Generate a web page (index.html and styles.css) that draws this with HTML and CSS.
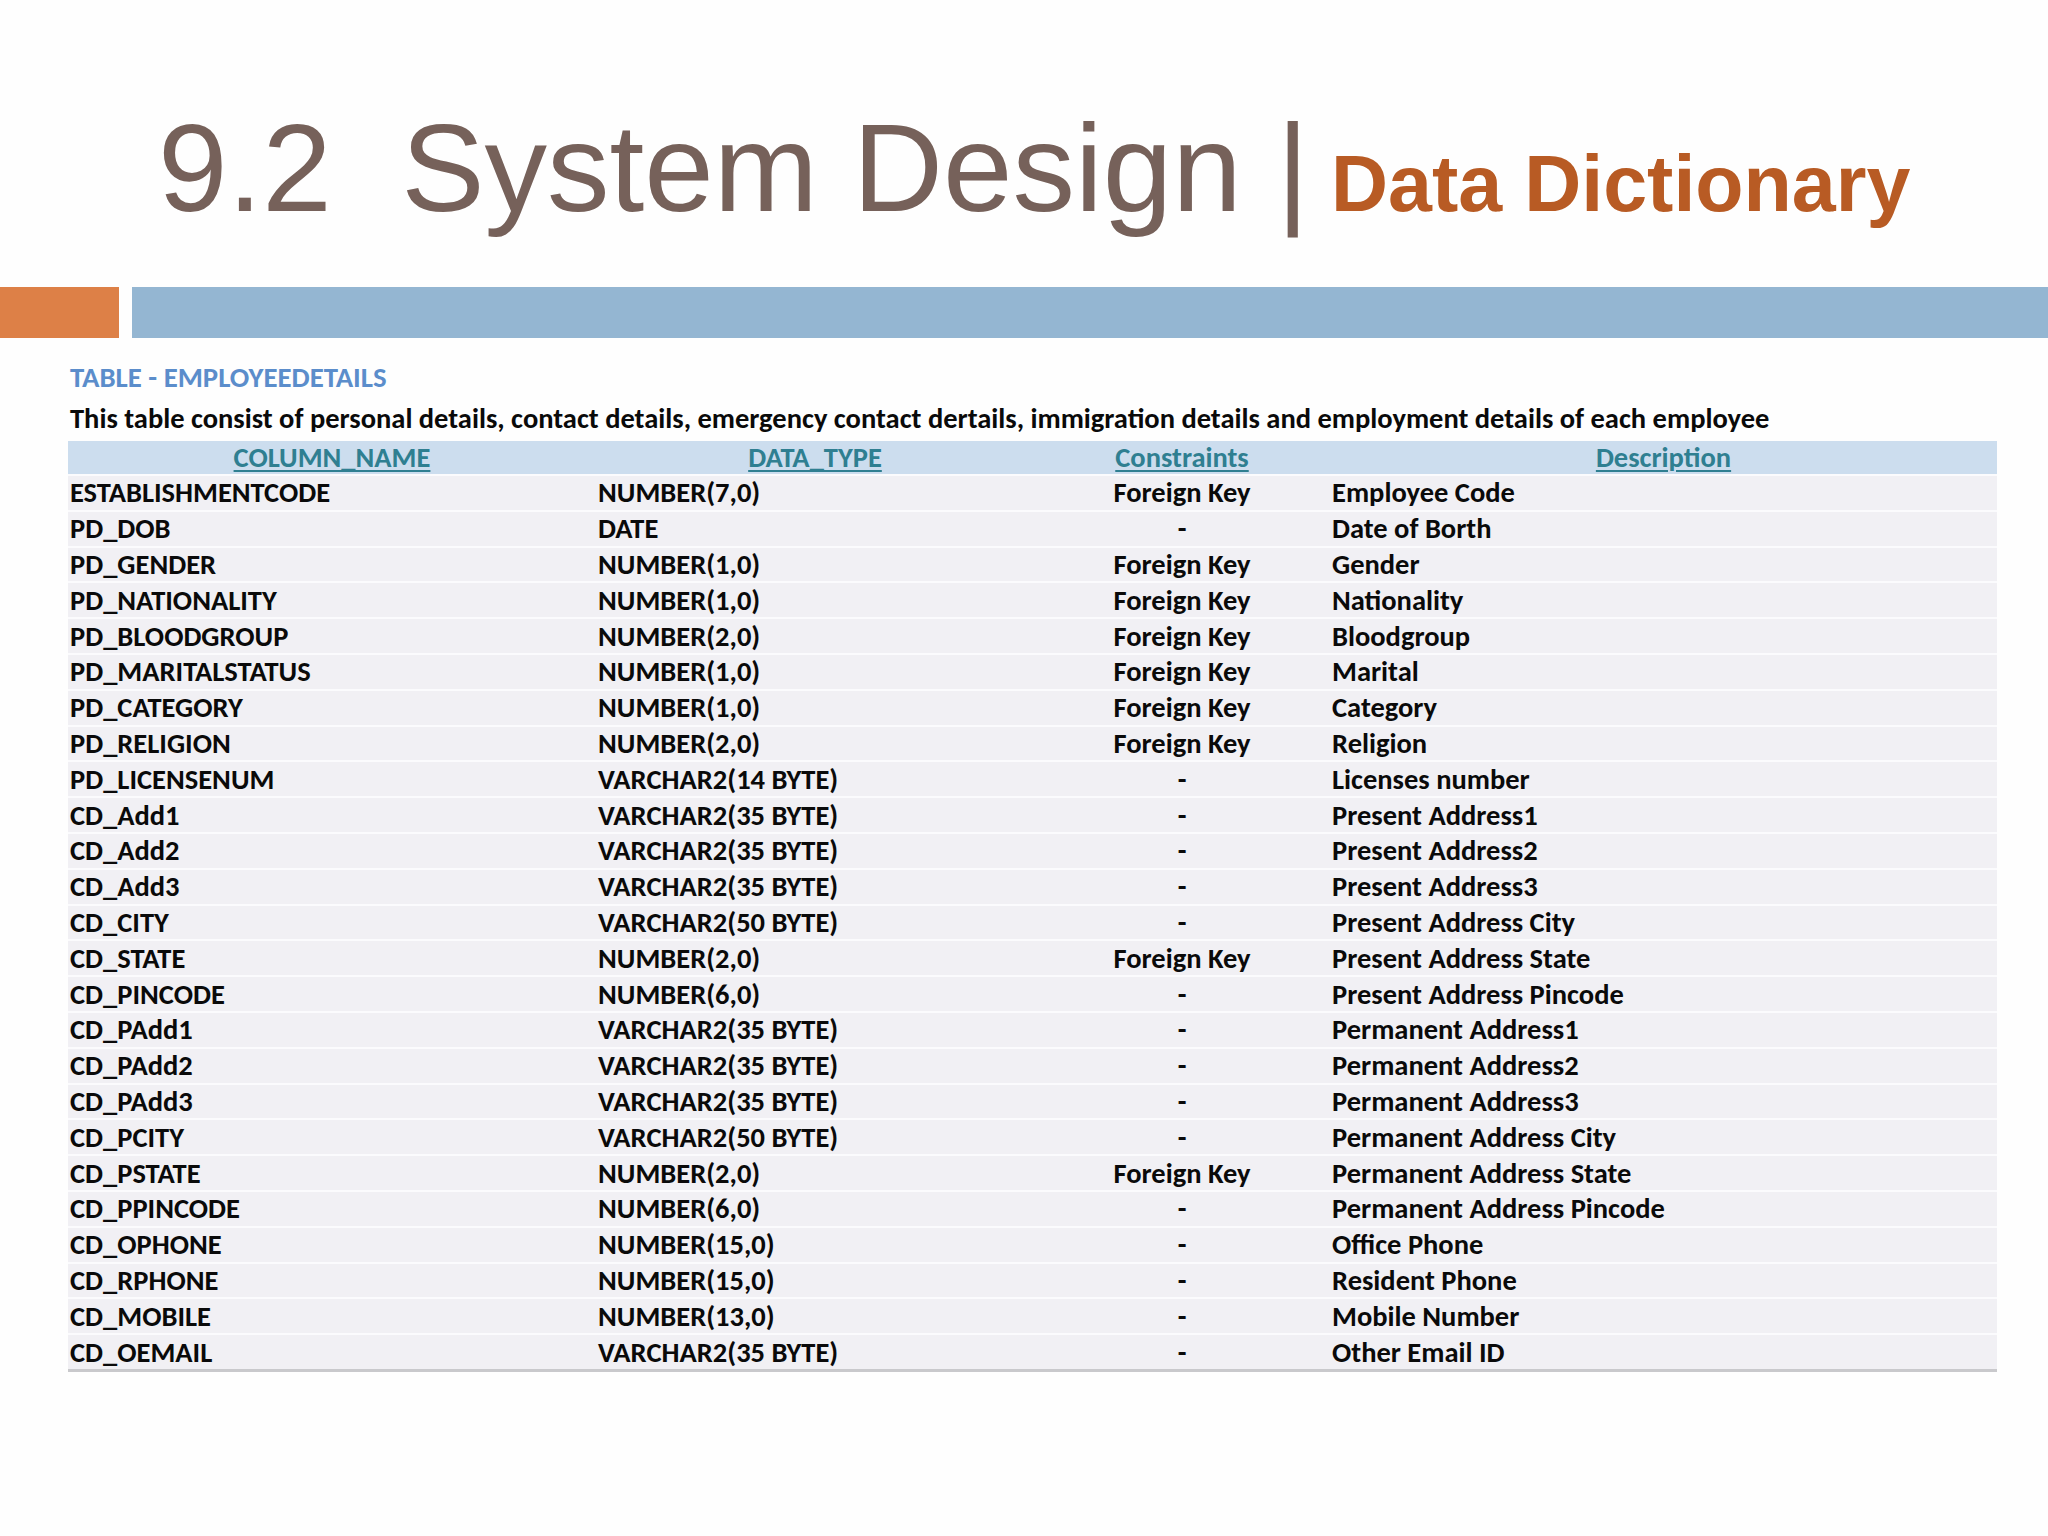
FILE: index.html
```html
<!DOCTYPE html>
<html lang="en">
<head>
<meta charset="utf-8">
<title>9.2 System Design | Data Dictionary</title>
<link rel="stylesheet" href="styles.css">
</head>
<body>
<div class="slide">
  <header class="title">
    <h1 class="title-text">9.2&nbsp; System Design |<span class="title-sub"> Data Dictionary</span></h1>
  </header>
  <div class="bars">
    <div class="bar-orange"></div>
    <div class="bar-blue"></div>
  </div>
  <main class="content">
    <h2 class="table-name">TABLE - EMPLOYEEDETAILS</h2>
    <p class="table-desc">This table consist of personal details, contact details, emergency contact dertails, immigration details and employment details of each employee</p>
    <table class="dict">
      <colgroup>
        <col class="c1"><col class="c2"><col class="c3"><col class="c4">
      </colgroup>
      <thead>
        <tr>
          <th><u>COLUMN_NAME</u></th>
          <th><u>DATA_TYPE</u></th>
          <th><u>Constraints</u></th>
          <th><u>Description</u></th>
        </tr>
      </thead>
      <tbody>
        <tr><td>ESTABLISHMENTCODE</td><td>NUMBER(7,0)</td><td class="ctr">Foreign Key</td><td>Employee Code</td></tr>
        <tr><td>PD_DOB</td><td>DATE</td><td class="ctr">-</td><td>Date of Borth</td></tr>
        <tr><td>PD_GENDER</td><td>NUMBER(1,0)</td><td class="ctr">Foreign Key</td><td>Gender</td></tr>
        <tr><td>PD_NATIONALITY</td><td>NUMBER(1,0)</td><td class="ctr">Foreign Key</td><td>Nationality</td></tr>
        <tr><td>PD_BLOODGROUP</td><td>NUMBER(2,0)</td><td class="ctr">Foreign Key</td><td>Bloodgroup</td></tr>
        <tr><td>PD_MARITALSTATUS</td><td>NUMBER(1,0)</td><td class="ctr">Foreign Key</td><td>Marital</td></tr>
        <tr><td>PD_CATEGORY</td><td>NUMBER(1,0)</td><td class="ctr">Foreign Key</td><td>Category</td></tr>
        <tr><td>PD_RELIGION</td><td>NUMBER(2,0)</td><td class="ctr">Foreign Key</td><td>Religion</td></tr>
        <tr><td>PD_LICENSENUM</td><td>VARCHAR2(14 BYTE)</td><td class="ctr">-</td><td>Licenses number</td></tr>
        <tr><td>CD_Add1</td><td>VARCHAR2(35 BYTE)</td><td class="ctr">-</td><td>Present Address1</td></tr>
        <tr><td>CD_Add2</td><td>VARCHAR2(35 BYTE)</td><td class="ctr">-</td><td>Present Address2</td></tr>
        <tr><td>CD_Add3</td><td>VARCHAR2(35 BYTE)</td><td class="ctr">-</td><td>Present Address3</td></tr>
        <tr><td>CD_CITY</td><td>VARCHAR2(50 BYTE)</td><td class="ctr">-</td><td>Present Address City</td></tr>
        <tr><td>CD_STATE</td><td>NUMBER(2,0)</td><td class="ctr">Foreign Key</td><td>Present Address State</td></tr>
        <tr><td>CD_PINCODE</td><td>NUMBER(6,0)</td><td class="ctr">-</td><td>Present Address Pincode</td></tr>
        <tr><td>CD_PAdd1</td><td>VARCHAR2(35 BYTE)</td><td class="ctr">-</td><td>Permanent Address1</td></tr>
        <tr><td>CD_PAdd2</td><td>VARCHAR2(35 BYTE)</td><td class="ctr">-</td><td>Permanent Address2</td></tr>
        <tr><td>CD_PAdd3</td><td>VARCHAR2(35 BYTE)</td><td class="ctr">-</td><td>Permanent Address3</td></tr>
        <tr><td>CD_PCITY</td><td>VARCHAR2(50 BYTE)</td><td class="ctr">-</td><td>Permanent Address City</td></tr>
        <tr><td>CD_PSTATE</td><td>NUMBER(2,0)</td><td class="ctr">Foreign Key</td><td>Permanent Address State</td></tr>
        <tr><td>CD_PPINCODE</td><td>NUMBER(6,0)</td><td class="ctr">-</td><td>Permanent Address Pincode</td></tr>
        <tr><td>CD_OPHONE</td><td>NUMBER(15,0)</td><td class="ctr">-</td><td>Office Phone</td></tr>
        <tr><td>CD_RPHONE</td><td>NUMBER(15,0)</td><td class="ctr">-</td><td>Resident Phone</td></tr>
        <tr><td>CD_MOBILE</td><td>NUMBER(13,0)</td><td class="ctr">-</td><td>Mobile Number</td></tr>
        <tr><td>CD_OEMAIL</td><td>VARCHAR2(35 BYTE)</td><td class="ctr">-</td><td>Other Email ID</td></tr>
      </tbody>
    </table>
  </main>
</div>
</body>
</html>
```

FILE: styles.css
```css
html, body {
  margin: 0;
  padding: 0;
  background: #ffffff;
}

.slide {
  width: 2048px;
  height: 1536px;
  background: #fefefe;
  overflow: hidden;
}

.title {
  padding: 93px 0 0 158px;
}

.title-text {
  margin: 0;
  font-family: "Liberation Sans", Arial, sans-serif;
  font-weight: normal;
  font-size: 125px;
  line-height: 150px;
  color: #76615a;
  white-space: nowrap;
}

.title-sub {
  font-weight: bold;
  font-size: 79px;
  line-height: 1;
  color: #b85b24;
}

.bars {
  display: flex;
  gap: 13px;
  margin-top: 44px;
  height: 51px;
}

.bar-orange {
  width: 119px;
  background: #dd8047;
}

.bar-blue {
  flex: 1;
  background: #94b6d2;
}

.content {
  padding: 22px 0 0 68px;
  font-family: Carlito, Lato, "Open Sans", sans-serif;
  font-weight: bold;
  font-size: 28.5px;
  color: #0a0a0a;
}

.table-name {
  margin: 0;
  font-size: 28.8px;
  line-height: 36px;
  font-weight: bold;
  color: #5b8dcb;
  padding-left: 2px;
}

.table-desc {
  margin: 5px 0 0 0;
  line-height: 36px;
  padding-left: 2px;
  white-space: nowrap;
}

.dict {
  margin-top: 4px;
  width: 1929px;
  table-layout: fixed;
  border-collapse: collapse;
  border-spacing: 0;
}

.c1 { width: 528px; }
.c2 { width: 438px; }
.c3 { width: 296px; }
.c4 { width: 667px; }

.dict th {
  height: 33px;
  padding: 0;
  background: #ccddee;
  color: #2f7f91;
  font-weight: bold;
  text-align: center;
  vertical-align: middle;
  line-height: 33px;
}

.dict th u {
  text-decoration-thickness: 2px;
  text-underline-offset: 3px;
}

.dict td {
  height: 33.8px;
  padding: 0 0 0 2px;
  background: #f1f0f4;
  border-top: 2px solid #fbfbfd;
  line-height: 33px;
  vertical-align: middle;
  white-space: nowrap;
}

.dict td.ctr {
  text-align: center;
  padding: 0;
}

.dict tbody tr:last-child td {
  border-bottom: 3px solid #c9c9cc;
}
```
